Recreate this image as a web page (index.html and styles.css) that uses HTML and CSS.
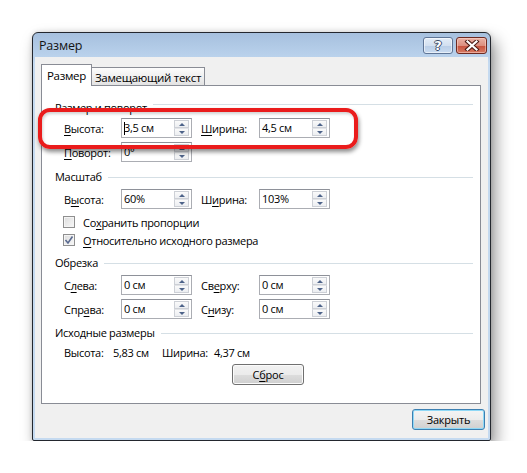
FILE: index.html
```html
<!DOCTYPE html>
<html lang="ru">
<head>
<meta charset="utf-8">
<title>Размер</title>
<link rel="stylesheet" href="styles.css">
</head>
<body>
<div class="window">
  <div class="titlebar">
    <span class="title">Размер</span>
    <div class="caption">
      <span class="cbtn help">?</span>
      <span class="cbtn close"><svg width="16" height="11" viewBox="0 0 16 11"><path d="M3.5 1.5 L12.5 9.5 M12.5 1.5 L3.5 9.5" stroke="#4a1a14" stroke-width="4.2" stroke-linecap="square"/><path d="M3.5 1.5 L12.5 9.5 M12.5 1.5 L3.5 9.5" stroke="#fff" stroke-width="2.2" stroke-linecap="square"/></svg></span>
    </div>
  </div>
  <div class="client">
    <div class="tabview">
      <div class="tabs">
        <div class="tab active">Размер</div>
        <div class="tab">Замещающий текст</div>
      </div>
      <div class="panel">
        <div class="gtitle g1">Размер и поворот</div>
        <div class="row r1">
          <span class="lbl"><u>В</u>ысота:</span>
          <div class="spin"><span class="val"><span class="caret"></span>3,5 см</span><span class="arrows"><i class="up"></i><i class="dn"></i></span></div>
          <span class="lbl2"><u>Ш</u>ирина:</span>
          <div class="spin"><span class="val">4,5 см</span><span class="arrows"><i class="up"></i><i class="dn"></i></span></div>
        </div>
        <div class="row r2">
          <span class="lbl"><u>П</u>оворот:</span>
          <div class="spin"><span class="val">0°</span><span class="arrows"><i class="up"></i><i class="dn"></i></span></div>
        </div>
        <div class="gtitle g2">Масштаб</div>
        <div class="row r3">
          <span class="lbl">В<u>ы</u>сота:</span>
          <div class="spin"><span class="val">60%</span><span class="arrows"><i class="up"></i><i class="dn"></i></span></div>
          <span class="lbl2">Ш<u>и</u>рина:</span>
          <div class="spin"><span class="val">103%</span><span class="arrows"><i class="up"></i><i class="dn"></i></span></div>
        </div>
        <div class="check cb1"><span class="box"></span><span>Со<u>х</u>ранить пропорции</span></div>
        <div class="check"><span class="box checked"><svg width="10" height="10" viewBox="0 0 10 10"><path d="M1.5 5 L4 8 L8.5 1.5" fill="none" stroke="#5a6a90" stroke-width="1.6"/></svg></span><span><u>О</u>тносительно исходного размера</span></div>
        <div class="gtitle g3">Обрезка</div>
        <div class="row r3">
          <span class="lbl">С<u>л</u>ева:</span>
          <div class="spin"><span class="val">0 см</span><span class="arrows"><i class="up"></i><i class="dn"></i></span></div>
          <span class="lbl2">Св<u>е</u>рху:</span>
          <div class="spin"><span class="val">0 см</span><span class="arrows"><i class="up"></i><i class="dn"></i></span></div>
        </div>
        <div class="row r2">
          <span class="lbl">Спр<u>а</u>ва:</span>
          <div class="spin"><span class="val">0 см</span><span class="arrows"><i class="up"></i><i class="dn"></i></span></div>
          <span class="lbl2">С<u>н</u>изу:</span>
          <div class="spin"><span class="val">0 см</span><span class="arrows"><i class="up"></i><i class="dn"></i></span></div>
        </div>
        <div class="gtitle g3">Исходные размеры</div>
        <div class="orig">
          <span>Высота:</span><span>5,83 см</span><span>Ширина:</span><span>4,37 см</span>
        </div>
        <div class="resetrow"><button class="btn reset">С<u>б</u>рос</button></div>
      </div>
    </div>
    <div class="footer"><button class="btn default">Закрыть</button></div>
  </div>
  <div class="highlight"></div>
</div>
</body>
</html>
```
FILE: styles.css
```css
* { box-sizing: border-box; }
html, body { margin: 0; background: #fff; }
body {
  padding: 32px 0 0 32px;
  font-family: "Open Sans", "Noto Sans", sans-serif;
  font-size: 11px;
  letter-spacing: -0.3px;
  color: #000;
}
u { text-decoration: underline; text-underline-offset: 2px; }

.window {
  position: relative;
  width: 459px;
  height: 409px;
  border: 1px solid #23272e;
  border-radius: 6px 6px 2px 2px;
  background: linear-gradient(#a6c0de, #bad2ec 24px, #c5daf0 30px, #c5daf0 100%);
  box-shadow: 5px 8px 16px rgba(0, 0, 0, 0.4), 0 0 5px rgba(0,0,0,0.15);
  display: flex;
  flex-direction: column;
}
.titlebar {
  height: 24px;
  flex: none;
  display: flex;
  align-items: flex-start;
  padding: 0 3px 0 6px;
}
.title { font-size: 12.5px; line-height: 26px; color: #141414; letter-spacing: -0.2px; }
.caption { margin-left: auto; display: flex; gap: 3px; padding-top: 4px; }
.cbtn {
  height: 17px;
  border-radius: 3px;
  display: flex;
  align-items: center;
  justify-content: center;
}
.help {
  width: 30px;
  border: 1px solid #5f7596;
  background: linear-gradient(#e4edf8, #d3e0f0 50%, #b9cde6 50%, #cadcf1);
  box-shadow: inset 0 0 0 1px rgba(255,255,255,0.55);
  color: #fff;
  font-family: "DejaVu Sans", sans-serif;
  font-weight: bold;
  font-size: 13px;
  line-height: 15px;
  letter-spacing: 0;
  text-shadow: 1px 0 0 #3c4c66, -1px 0 0 #3c4c66, 0 1px 0 #3c4c66, 0 -1px 0 #3c4c66;
}
.close {
  width: 31px;
  border: 1px solid #6e2a22;
  background: linear-gradient(#eab2a6, #dc8f7f 50%, #c6503c 50%, #d77a63);
  box-shadow: inset 0 0 0 1px rgba(255,220,210,0.5);
}
.close svg { display: block; }

.client {
  flex: 1;
  margin: 0 2px 2px 2px;
  background: #f0f0f0;
  display: flex;
  flex-direction: column;
}
.tabview { margin: 7px 7px 0 6px; }
.tabs {
  display: flex;
  align-items: flex-end;
  height: 22px;
  margin-bottom: -1px;
  position: relative;
  z-index: 1;
}
.tab {
  height: 19px;
  width: 113px;
  border: 1px solid #898c95;
  border-left: none;
  background: linear-gradient(#fcfcfc, #f0f0f0 50%, #e3e3e3);
  line-height: 18px;
  text-align: center;
  padding-top: 1px;
  font-size: 11.5px;
}
.tab.active {
  height: 22px;
  width: 51px;
  border-left: 1px solid #898c95;
  border-bottom: none;
  background: #fff;
  line-height: 20px;
  padding-top: 1px;
}
.panel {
  height: 319px;
  border: 1px solid #898c95;
  background: #fff;
  padding: 9px 7px 0 13px;
}
.gtitle {
  height: 16px;
  line-height: 16px;
  display: flex;
  align-items: center;
}
.gtitle::after {
  content: "";
  flex: 1;
  height: 1px;
  background: #d5dfe5;
  margin-left: 6px;
}
.g1 { padding-top: 5px; align-items: flex-start; }
.g1::after { margin-top: 4px; }
.g2 { margin-top: 7px; }
.g3 { margin-top: 6px; }

.row {
  display: grid;
  grid-template-columns: 57px 71px 67px 71px;
  height: 20px;
  align-items: center;
  margin-left: 9px;
}
.r1 { margin-top: 7px; }
.r2 { margin-top: 4px; }
.r3 { margin-top: 4px; }
.lbl2 { padding-left: 9px; }
.spin {
  height: 20px;
  border: 1px solid #abadb3;
  border-top-color: #8e9199;
  background: #fff;
  display: flex;
  align-items: stretch;
}
.val { flex: 1; padding-left: 2px; line-height: 18px; display: flex; align-items: center; }
.caret {
  width: 1px;
  height: 13px;
  background: #000;
  margin-right: -1px;
}
.arrows {
  width: 15px;
  margin: 1px 2px 1px 0;
  display: flex;
  flex-direction: column;
}
.arrows i {
  flex: 1;
  border: 1px solid #cdd0d6;
  background: linear-gradient(#fafafa, #eceef1);
  display: flex;
  align-items: center;
  justify-content: center;
}
.arrows i + i { border-top-color: #e2e4e8; }
.arrows i::before {
  content: "";
  border-left: 3px solid transparent;
  border-right: 3px solid transparent;
}
.arrows .up::before { border-bottom: 3px solid #4d6389; }
.arrows .dn::before { border-top: 3px solid #4d6389; }

.check {
  height: 18px;
  display: flex;
  align-items: center;
  margin-left: 8px;
}
.cb1 { margin-top: 4px; }
.box {
  width: 12px;
  height: 12px;
  border: 1px solid #8f8f8f;
  background: linear-gradient(135deg, #dcdcdc, #f8f8f8);
  box-shadow: inset 0 0 0 1px #f4f4f4;
  margin-right: 8px;
  display: flex;
  align-items: center;
  justify-content: center;
}
.box svg { display: block; }

.orig {
  margin-top: 4px;
  margin-left: 9px;
  height: 16px;
  line-height: 16px;
  display: grid;
  grid-template-columns: 49px 49px 52px auto;
}
.resetrow { margin-top: 3px; padding-left: 177px; }
.btn {
  font: inherit;
  letter-spacing: -0.2px;
  color: #000;
  height: 21px;
  padding: 0;
  border-radius: 3px;
  background: linear-gradient(#f2f2f2, #ebebeb 50%, #dddddd 50%, #cfcfcf);
  line-height: 17px;
  text-align: center;
}
.reset {
  width: 72px;
  border: 1px solid #707070;
  box-shadow: inset 0 0 0 1px #fbfbfb;
}
.footer {
  display: flex;
  justify-content: flex-end;
  padding: 5px 3px 0 0;
}
.default {
  width: 73px;
  border: 1px solid #3c7fb1;
  box-shadow: inset 0 0 0 1px #8fd8f6;
  background: linear-gradient(#f4f4f4, #ececec 50%, #dedede 50%, #d0d0d0);
}

.highlight {
  position: absolute;
  left: 5px;
  top: 75px;
  width: 320px;
  height: 41px;
  border: 4px solid #ea1c1c;
  border-radius: 12px;
  box-shadow: 1px 3px 4px rgba(0, 0, 0, 0.45), inset 1px 2px 3px rgba(0, 0, 0, 0.18);
  pointer-events: none;
}
```
